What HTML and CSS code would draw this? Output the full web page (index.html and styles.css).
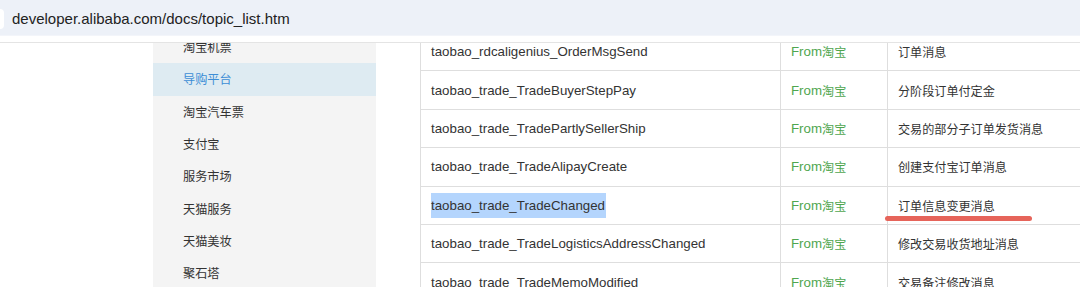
FILE: index.html
```html
<!DOCTYPE html>
<html lang="zh-CN">
<head>
<meta charset="utf-8">
<title>topic_list</title>
<link rel="stylesheet" href="styles.css">
</head>
<body>
  <header class="addr-bar">
    <span class="addr-pill"></span>
    <span class="addr-url">developer.alibaba.com/docs/topic_list.htm</span>
  </header>
  <div class="addr-gap"></div>
  <main class="viewport">
    <div class="page">
      <nav class="sidebar">
        <div class="side-item">淘宝机票</div>
        <div class="side-item active">导购平台</div>
        <div class="side-item">淘宝汽车票</div>
        <div class="side-item">支付宝</div>
        <div class="side-item">服务市场</div>
        <div class="side-item">天猫服务</div>
        <div class="side-item">天猫美妆</div>
        <div class="side-item">聚石塔</div>
      </nav>
      <div class="table">
        <div class="row">
          <div class="cell c1">taobao_rdcaligenius_OrderMsgSend</div>
          <div class="cell c2">From<span class="cjk">淘宝</span></div>
          <div class="cell c3 cjk">订单消息</div>
        </div>
        <div class="row">
          <div class="cell c1">taobao_trade_TradeBuyerStepPay</div>
          <div class="cell c2">From<span class="cjk">淘宝</span></div>
          <div class="cell c3 cjk">分阶段订单付定金</div>
        </div>
        <div class="row">
          <div class="cell c1">taobao_trade_TradePartlySellerShip</div>
          <div class="cell c2">From<span class="cjk">淘宝</span></div>
          <div class="cell c3 cjk">交易的部分子订单发货消息</div>
        </div>
        <div class="row">
          <div class="cell c1">taobao_trade_TradeAlipayCreate</div>
          <div class="cell c2">From<span class="cjk">淘宝</span></div>
          <div class="cell c3 cjk">创建支付宝订单消息</div>
        </div>
        <div class="row">
          <div class="cell c1"><span class="selected">taobao_trade_TradeChanged</span></div>
          <div class="cell c2">From<span class="cjk">淘宝</span></div>
          <div class="cell c3 cjk marked">订单信息变更消息</div>
        </div>
        <div class="row">
          <div class="cell c1">taobao_trade_TradeLogisticsAddressChanged</div>
          <div class="cell c2">From<span class="cjk">淘宝</span></div>
          <div class="cell c3 cjk">修改交易收货地址消息</div>
        </div>
        <div class="row">
          <div class="cell c1">taobao_trade_TradeMemoModified</div>
          <div class="cell c2">From<span class="cjk">淘宝</span></div>
          <div class="cell c3 cjk">交易备注修改消息</div>
        </div>
      </div>
    </div>
  </main>
</body>
</html>
```
FILE: styles.css
```css
* { box-sizing: border-box; }
html, body {
  margin: 0;
  padding: 0;
  background: #ffffff;
  width: 1080px;
  height: 287px;
  overflow: hidden;
  font-family: "Liberation Sans", Arial, "Noto Sans CJK SC", sans-serif;
  color: #333333;
}

.addr-bar {
  height: 36px;
  background: #edf1f8;
  border-bottom: 1px solid #f3f5fa;
  display: flex;
  align-items: center;
}
.addr-pill {
  width: 4px;
  height: 20px;
  background: #ffffff;
  border-radius: 0 10px 10px 0;
  margin-top: 2px;
}
.addr-url {
  margin-left: 8px;
  margin-top: 2px;
  font-size: 15px;
  color: #222222;
}
.addr-gap {
  height: 7px;
  border-bottom: 1px solid #e4e4e4;
}

.viewport {
  height: 244px;
  overflow: hidden;
}
.page {
  display: flex;
  align-items: flex-start;
  padding-left: 153px;
}

.sidebar {
  width: 223px;
  margin-top: -12px;
  background: #f4f4f4;
  flex: none;
}
.side-item {
  height: 32.3px;
  display: flex;
  align-items: center;
  padding-left: 30px;
  font-family: "Noto Sans CJK SC", sans-serif;
  font-size: 12.2px;
  color: #333333;
}
.side-item.active {
  background: #deebf2;
  color: #3d8ed6;
}

.table {
  margin-left: 44px;
  margin-top: -10px;
  flex: none;
  border-left: 1px solid #dedede;
}
.row {
  display: flex;
  height: 38.4px;
  border-bottom: 1px solid #dedede;
}
.cell {
  display: flex;
  align-items: center;
  padding-left: 10px;
  font-size: 13.3px;
  color: #333333;
  white-space: nowrap;
}
.c1 { width: 360px; border-right: 1px solid #dedede; }
.c2 { width: 107px; border-right: 1px solid #dedede; color: #4fa64f; }
.c3 { width: 300px; }
.cjk {
  font-family: "Noto Sans CJK SC", sans-serif;
  font-size: 12.1px;
}
.selected {
  background: #b4d5fd;
  padding: 5px 1px 5px 0;
}
.marked { position: relative; }
.marked::after {
  content: "";
  position: absolute;
  left: -3px;
  top: 29px;
  width: 147px;
  height: 5px;
  border-radius: 3px;
  background: #e6645a;
}
```
